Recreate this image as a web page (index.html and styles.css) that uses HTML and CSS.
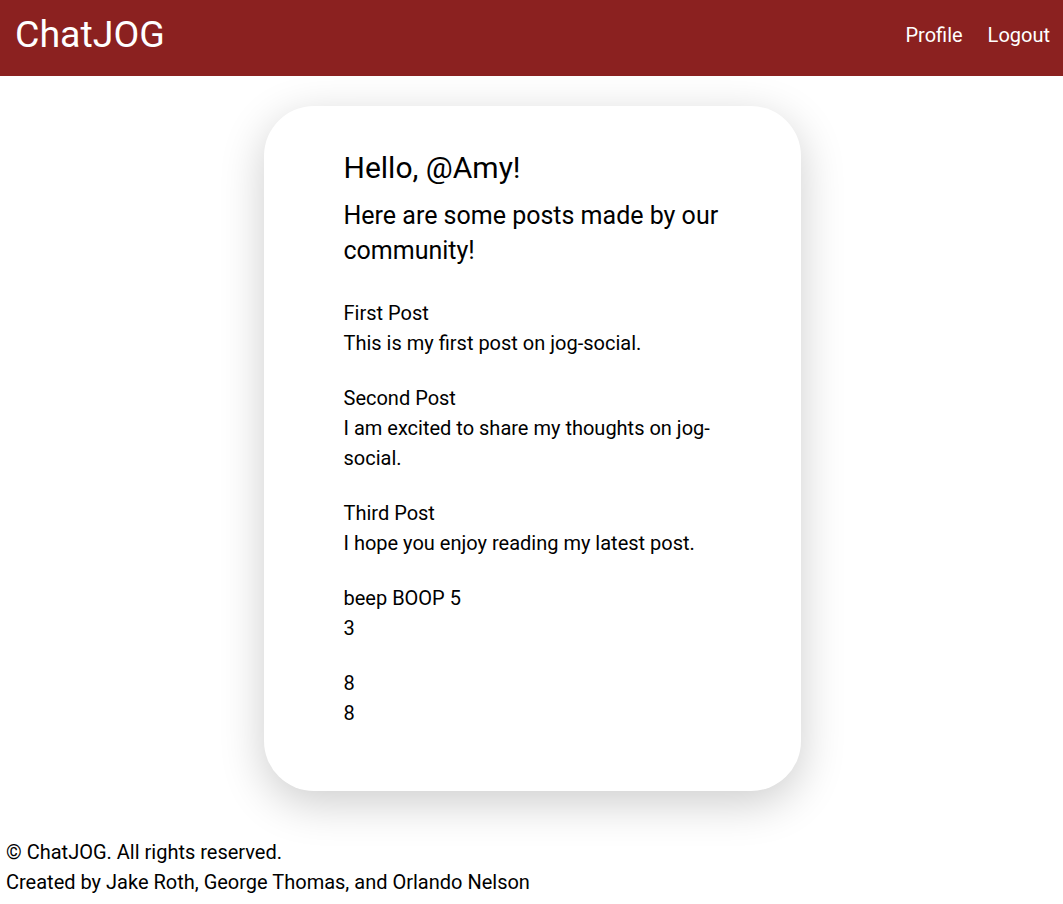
FILE: index.html
```html
<!DOCTYPE html>
<html>
<head>
<meta charset="utf-8">
<title>ChatJOG</title>
<link rel="stylesheet" href="styles.css">
</head>
<body>
<header class="topbar">
  <div class="brand">ChatJOG</div>
  <nav class="nav">
    <a class="nav-link" href="#">Profile</a>
    <a class="nav-link" href="#">Logout</a>
  </nav>
</header>
<main class="main">
  <section class="card">
    <h1 class="hello">Hello, @Amy!</h1>
    <h2 class="intro">Here are some posts made by our community!</h2>
    <div class="posts">
      <div class="post"><div class="post-title">First Post</div><div class="post-body">This is my first post on jog-social.</div></div>
      <div class="post"><div class="post-title">Second Post</div><div class="post-body">I am excited to share my thoughts on jog-social.</div></div>
      <div class="post"><div class="post-title">Third Post</div><div class="post-body">I hope you enjoy reading my latest post.</div></div>
      <div class="post"><div class="post-title">beep BOOP 5</div><div class="post-body">3</div></div>
      <div class="post"><div class="post-title">8</div><div class="post-body">8</div></div>
    </div>
  </section>
</main>
<footer class="footer">
  <div>© ChatJOG. All rights reserved.</div>
  <div>Created by Jake Roth, George Thomas, and Orlando Nelson</div>
</footer>
</body>
</html>
```
FILE: styles.css
```css
html, body {
  margin: 0;
  padding: 0;
  background: #fff;
  font-family: Roboto, "Liberation Sans", sans-serif;
  color: #000;
}
.topbar {
  height: 76px;
  background: #8b2120;
  display: flex;
  align-items: center;
  justify-content: space-between;
  padding: 0 13px 6px 15px;
  box-sizing: border-box;
}
.brand {
  color: #fff;
  font-size: 37.5px;
  line-height: 1;
}
.nav {
  display: flex;
  gap: 25px;
}
.nav-link {
  color: #fff;
  text-decoration: none;
  font-size: 20px;
}
.main {
  display: flex;
  justify-content: center;
  padding: 30px 0 0 1px;
}
.card {
  width: 537px;
  box-sizing: border-box;
  padding: 42px 80px 63px 80px;
  background: #fff;
  border-radius: 50px;
  box-shadow: 0 12px 45px rgba(0, 0, 0, 0.2);
}
.hello {
  margin: 0 0 10px 0;
  font-size: 30px;
  font-weight: 400;
  line-height: 40px;
}
.intro {
  margin: 0 0 30px 0;
  font-size: 25px;
  font-weight: 400;
  line-height: 35px;
}
.posts {
  display: flex;
  flex-direction: column;
  gap: 25px;
}
.post {
  font-size: 20px;
  line-height: 30px;
}
.footer {
  padding: 46px 6px 8px 6px;
  font-size: 20px;
  line-height: 30px;
}
```
